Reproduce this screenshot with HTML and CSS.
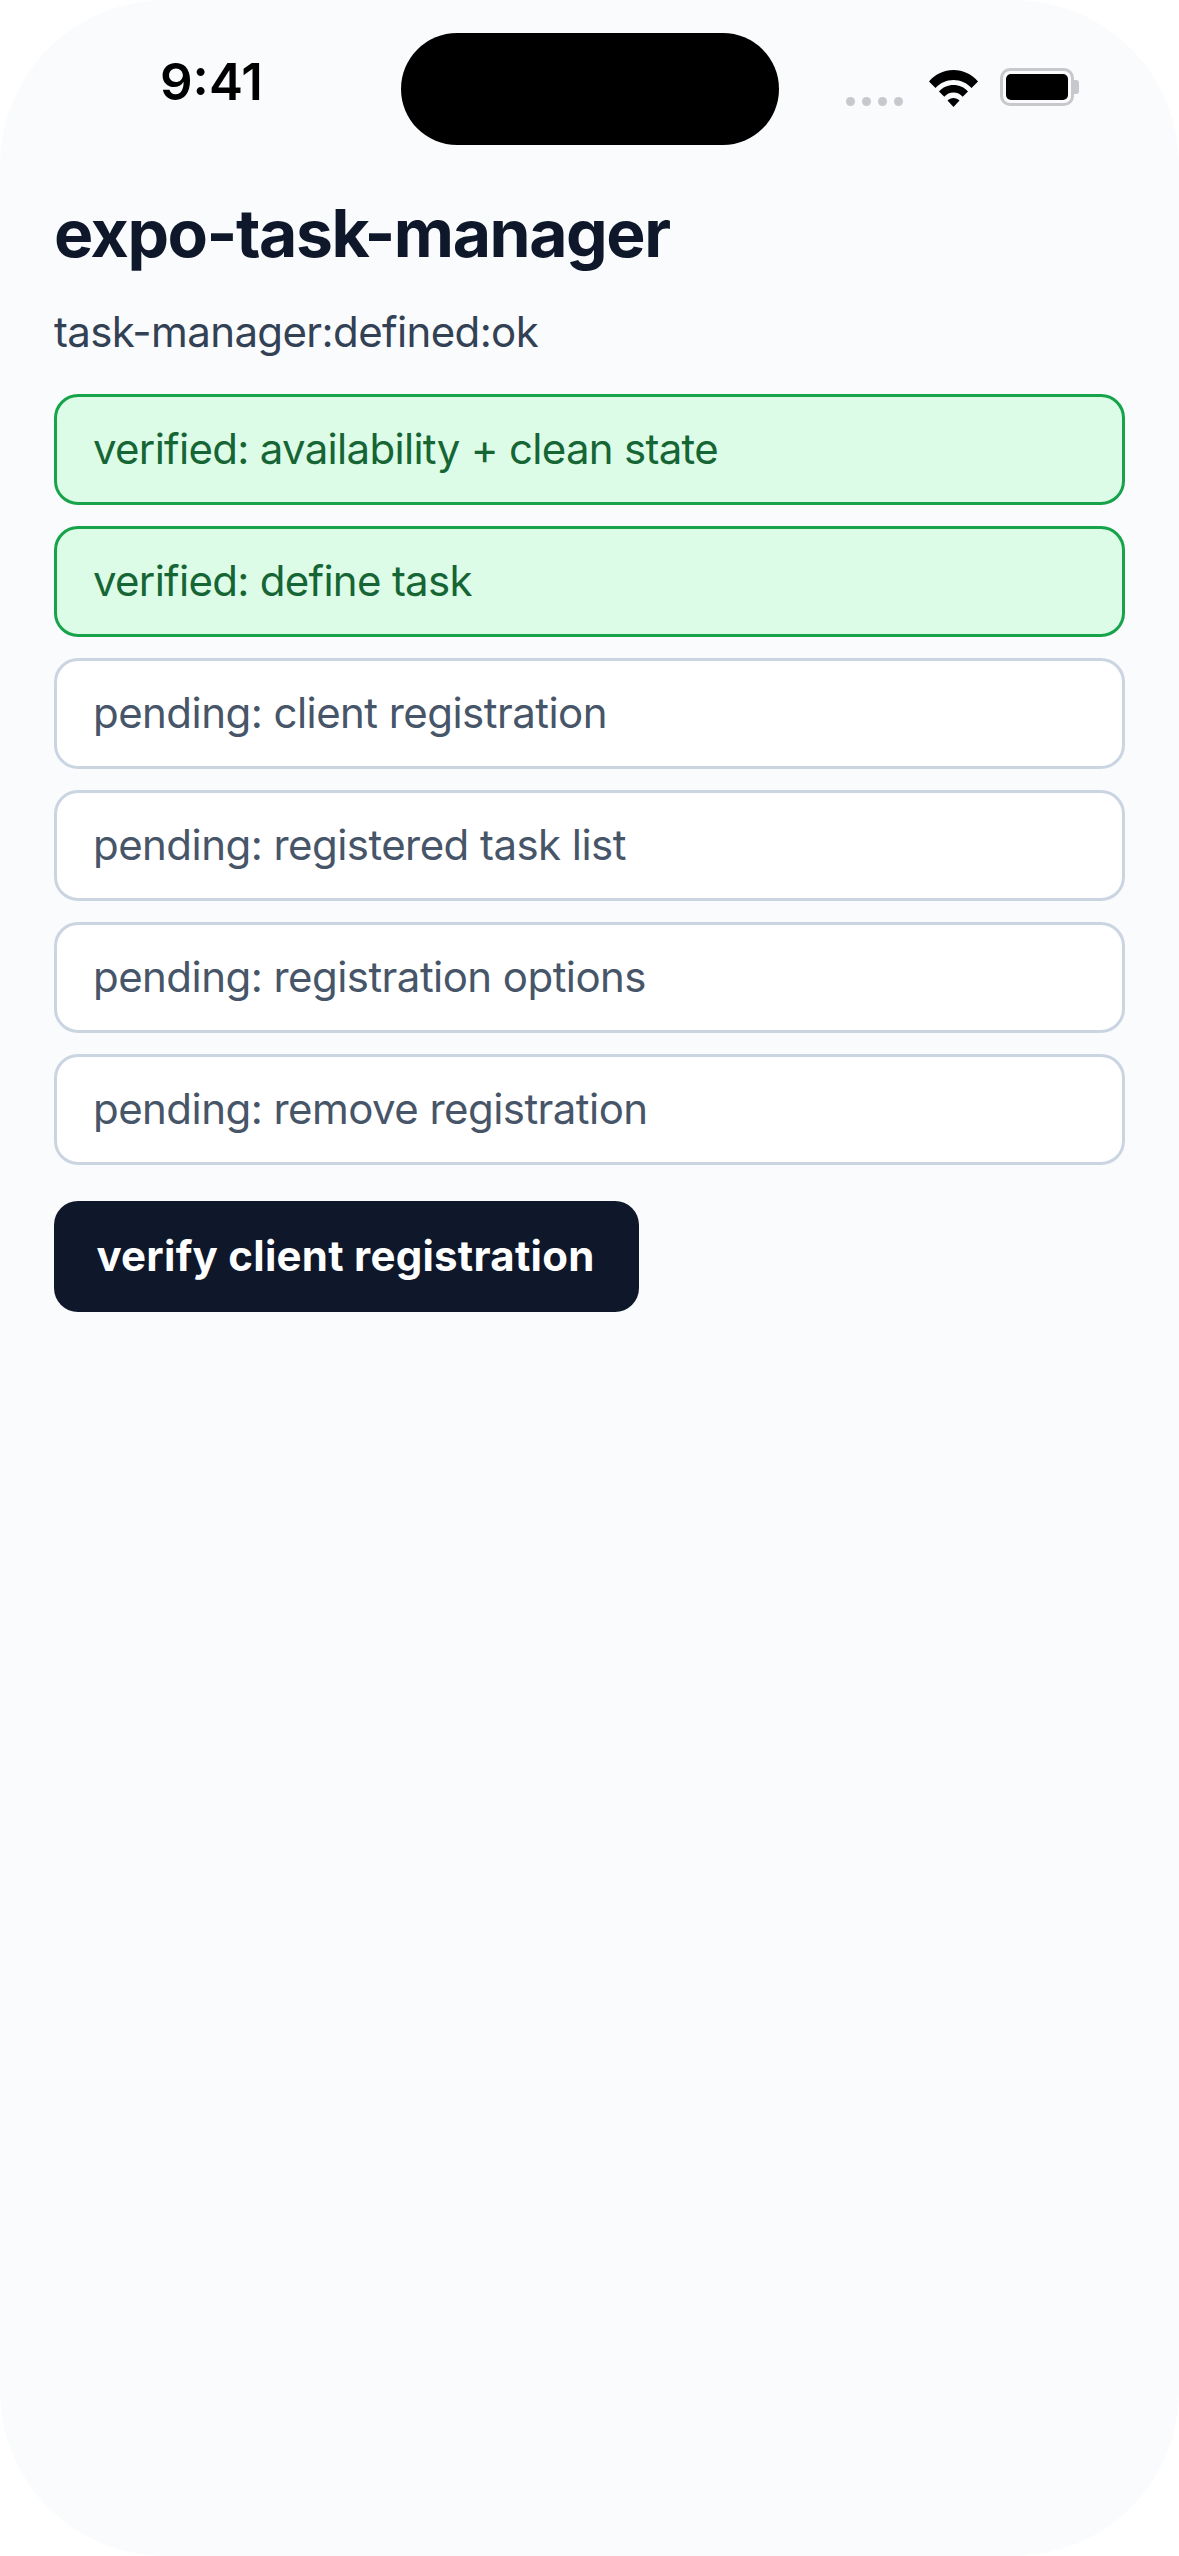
FILE: index.html
```html
<!DOCTYPE html>
<html lang="en">
<head>
<meta charset="utf-8">
<title>expo-task-manager</title>
<link rel="stylesheet" href="styles.css">
</head>
<body>
<div class="screen">
  <header class="statusbar">
    <div class="time">9:41</div>
    <div class="island"></div>
    <div class="indicators">
      <div class="signal"><span></span><span></span><span></span><span></span></div>
      <svg class="wifi" width="49" height="37" viewBox="0 0 49 37">
        <path d="M0 11.500C6.500 4 15 0 24.500 0S42.500 4 49 11.500L42.500 18C38 13 31.800 10 24.500 10S11 13 6.500 18Z"/>
        <path d="M10 21.500C13.700 17.300 18.800 15 24.500 15S35.300 17.300 39 21.500L33.700 26.800C31.300 24 28.200 22.500 24.500 22.500S17.700 24 15.300 26.800Z"/>
        <path d="M18.500 30.500C20.200 28.900 22.200 28 24.500 28S28.800 28.900 30.500 30.500L24.500 37Z"/>
      </svg>
      <div class="battery"><div class="battery-level"></div></div>
    </div>
  </header>
  <main class="content">
    <h1 class="title">expo-task-manager</h1>
    <p class="status">task-manager:defined:ok</p>
    <ul class="checks">
      <li class="check check-ok">verified: availability + clean state</li>
      <li class="check check-ok">verified: define task</li>
      <li class="check">pending: client registration</li>
      <li class="check">pending: registered task list</li>
      <li class="check">pending: registration options</li>
      <li class="check">pending: remove registration</li>
    </ul>
    <button class="action">verify client registration</button>
  </main>
</div>
</body>
</html>
```
FILE: styles.css
```css
* { box-sizing: border-box; }
html, body { margin: 0; padding: 0; background: #ffffff; }
body { width: 1179px; height: 2556px; overflow: hidden; font-family: Inter, "Liberation Sans", sans-serif; font-optical-sizing: none; font-variation-settings: "opsz" 14; }
.screen { width: 1179px; height: 2556px; border-radius: 165px; background: #f9fbfd; overflow: hidden; display: flex; flex-direction: column; }
.statusbar { height: 193px; flex: none; display: grid; grid-template-columns: 401px 378px 1fr; align-items: start; padding-top: 33px; }
.time { font-size: 51px; line-height: 60px; font-weight: 600; color: #000; padding: 19px 0 0 160px; }
.island { height: 112px; border-radius: 56px; background: #000; }
.indicators { display: flex; align-items: flex-start; padding: 35px 0 0 67px; }
.signal { display: flex; gap: 7px; margin-top: 29px; }
.signal span { width: 9px; height: 9px; border-radius: 50%; background: #c7c7cc; }
.wifi { margin: 2px 0 0 26px; fill: #000; }
.battery { position: relative; width: 74px; height: 38px; margin-left: 22px; border: 3px solid #c7c7cc; border-radius: 10px; padding: 3px; }
.battery::after { content: ""; position: absolute; right: -8px; top: 9px; width: 5px; height: 14px; background: #c7c7cc; border-radius: 0 3px 3px 0; }
.battery-level { height: 100%; background: #000; border-radius: 5px; }
.content { padding: 0 54px; display: flex; flex-direction: column; align-items: flex-start; }
.title { margin: 0; font-size: 66px; line-height: 80px; font-weight: 700; color: #0f172a; letter-spacing: -1.45px; }
.status { margin: 32px 0 0; font-size: 42px; line-height: 54px; color: #334155; letter-spacing: -0.62px; }
.checks { list-style: none; margin: 35px 0 0; padding: 0; width: 100%; display: flex; flex-direction: column; gap: 21px; }
.check { height: 111px; display: flex; align-items: center; padding: 0 36px 2px; border: 3px solid #cbd5e1; border-radius: 24px; background: #fff; color: #475569; font-size: 42px; letter-spacing: -0.55px; }
.check-ok { border-color: #16a34a; background: #dcfce7; color: #166534; letter-spacing: -0.7px; }
.action { margin-top: 36px; height: 111px; width: 585px; border: 0; border-radius: 24px; background: #0f172a; color: #fff; font-family: inherit; font-size: 42px; font-weight: 700; padding: 0 2px 2px 0; letter-spacing: 0.25px; }
```
